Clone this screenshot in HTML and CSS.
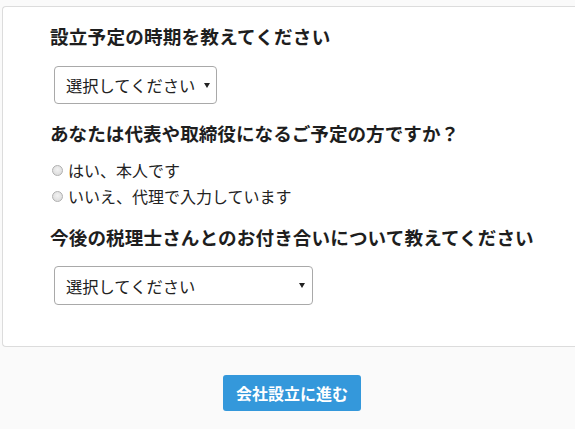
FILE: index.html
```html
<!DOCTYPE html>
<html lang="ja">
<head>
<meta charset="utf-8">
<link rel="stylesheet" href="styles.css">
</head>
<body>
<div class="page">
  <section class="card">
    <h2 class="q q1">設立予定の時期を教えてください</h2>
    <div class="select-wrap sw1">
      <select class="sel"><option>選択してください</option></select>
    </div>
    <h2 class="q q2">あなたは代表や取締役になるご予定の方ですか？</h2>
    <div class="radios">
      <label class="radio"><input type="radio" name="r"><span>はい、本人です</span></label>
      <label class="radio"><input type="radio" name="r"><span>いいえ、代理で入力しています</span></label>
    </div>
    <h2 class="q q3">今後の税理士さんとのお付き合いについて教えてください</h2>
    <div class="select-wrap sw2">
      <select class="sel"><option>選択してください</option></select>
    </div>
  </section>
  <div class="actions">
    <button class="btn">会社設立に進む</button>
  </div>
</div>
</body>
</html>
```
FILE: styles.css
```css
html, body {
  margin: 0;
  padding: 0;
  background: #fafafa;
  overflow: hidden;
}
body {
  font-family: "Noto Sans CJK JP", "Noto Sans", sans-serif;
  color: #222;
}
.page {
  padding-top: 6px;
  padding-left: 2px;
}
.card {
  background: #fff;
  border: 1px solid #dcdcdc;
  border-right: none;
  border-radius: 4px 0 0 4px;
  padding: 15px 0 41px 47px;
}
.q {
  margin: 0;
  font-size: 18.6px;
  line-height: 28px;
  font-weight: bold;
  color: #1e1e1e;
  letter-spacing: 0.2px;
}
.q2 { margin-top: 15px; letter-spacing: 0; }
.q3 { margin-top: 14px; letter-spacing: 0.1px; }
.select-wrap {
  position: relative;
  margin-left: 4px;
  margin-top: 16px;
}
.sw1 { width: 163px; }
.sw2 { width: 259px; margin-top: 15px; }
.select-wrap::after {
  content: "";
  position: absolute;
  right: 7px;
  top: 17px;
  border-left: 3px solid transparent;
  border-right: 3px solid transparent;
  border-top: 5px solid #222;
  pointer-events: none;
}
.sel {
  -webkit-appearance: none;
  appearance: none;
  display: block;
  width: 100%;
  height: 38px;
  box-sizing: border-box;
  border: 1px solid #a9a9a9;
  border-radius: 4px;
  background: #fff;
  font-family: inherit;
  font-size: 16.3px;
  color: #222;
  padding: 0 0 0 11px;
  line-height: 36px;
}
.sw2 .sel { height: 39px; }
.sw2::after { top: 17px; right: 8px; }
.radios {
  margin-top: 10px;
}
.radio {
  display: flex;
  align-items: center;
  height: 26px;
  font-size: 16px;
  color: #222;
}
.radio input {
  -webkit-appearance: none;
  appearance: none;
  width: 11px;
  height: 11px;
  margin: 0 5px 0 2px;
  border: 1px solid #b0b0b0;
  border-radius: 50%;
  background: radial-gradient(circle at 50% 40%, #f2f2f2 0, #d6d6d6 100%);
  box-sizing: border-box;
}
.actions {
  display: flex;
  justify-content: center;
  margin-top: 28px;
  padding-left: 7px;
}
.btn {
  width: 138px;
  height: 36px;
  border: none;
  border-radius: 3px;
  background: #3498db;
  color: #fff;
  font-family: inherit;
  font-size: 16px;
  font-weight: bold;
  padding: 0;
}
```
